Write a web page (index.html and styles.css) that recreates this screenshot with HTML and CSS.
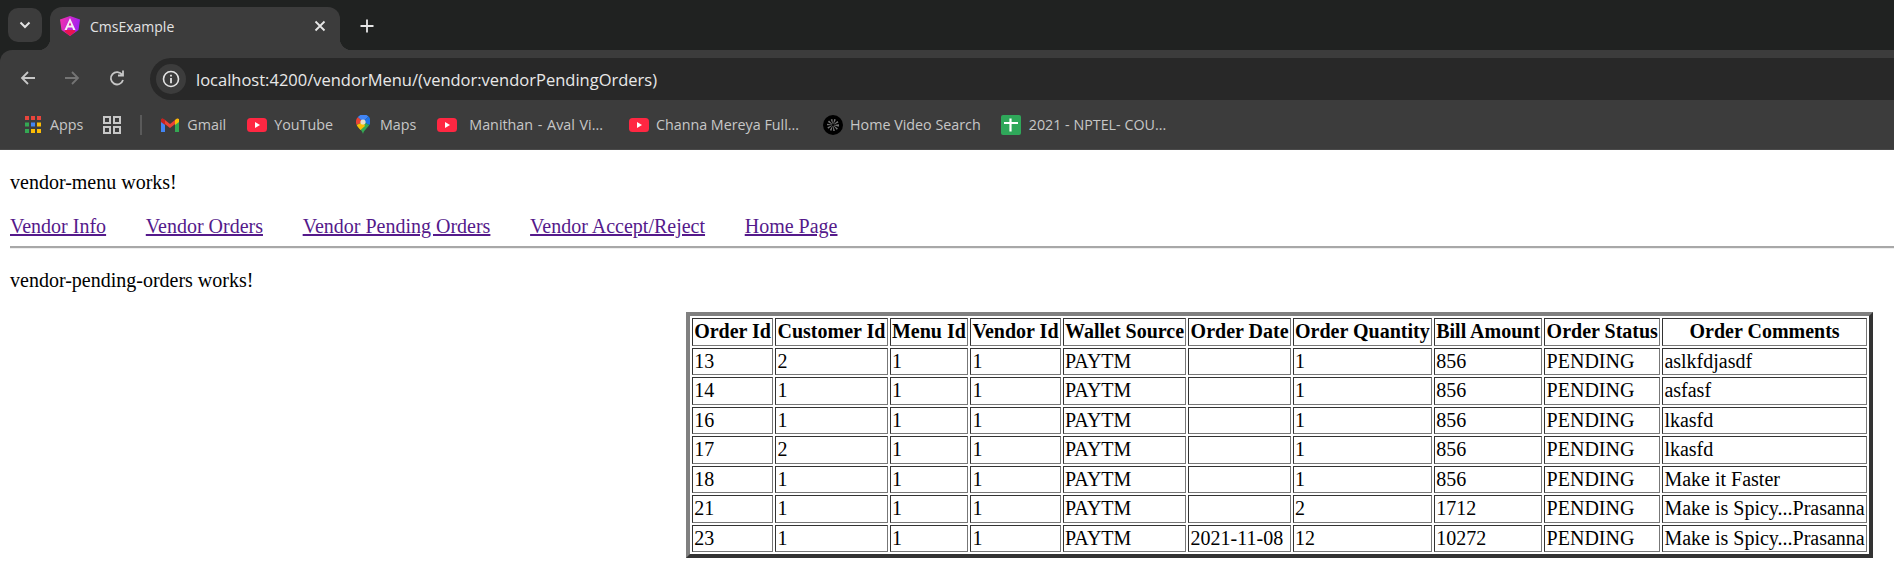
FILE: index.html
```html
<!DOCTYPE html>
<html lang="en">
<head>
    <meta charset="UTF-8">
    <title>CmsExample</title>
    <link rel="stylesheet" href="styles.css">
</head>
<body>
    <div class="browser">
        <div class="tab-strip">
            <div class="tab-search">
                <svg width="14" height="14" viewBox="0 0 14 14"><path d="M2.500 4.500L7 9l4.500-4.500" fill="none" stroke="#e3e3e3" stroke-width="2"/></svg>
            </div>
            <div class="tab">
                <svg class="tab-icon" width="20" height="20" viewBox="0 0 20 20">
                    <defs>
                        <linearGradient id="ng" x1="0" y1="0" x2="1" y2="0.300">
                            <stop offset="0" stop-color="#f72fa8"/>
                            <stop offset="1" stop-color="#a31ff2"/>
                        </linearGradient>
                    </defs>
                    <path d="M10 0L0 3.500 1.500 14 10 20l8.500-6L20 3.500z" fill="url(#ng)"/>
                    <path d="M4.500 15.500L10 20l5.500-4.500-1-1.500h-9z" fill="#ea1450"/>
                    <path d="M10 2L4.500 14h2.300l1-2.500h4.400l1 2.500h2.300z" fill="#f6eef6"/>
                    <path d="M8.600 9.500L10 6.200l1.400 3.300z" fill="#d9208c"/>
                </svg>
                <span class="tab-title">CmsExample</span>
                <svg class="tab-close" width="12" height="12" viewBox="0 0 12 12"><path d="M1.500 1.500l9 9M10.500 1.500l-9 9" stroke="#e6e6e6" stroke-width="1.800"/></svg>
            </div>
            <svg class="new-tab" width="16" height="16" viewBox="0 0 16 16"><path d="M8 1.500v13M1.500 8h13" stroke="#e6e6e6" stroke-width="1.800"/></svg>
        </div>

        <div class="toolbar">
            <svg class="nav-icon back" width="18" height="18" viewBox="0 0 18 18"><path d="M16 9H3M9 3L3 9l6 6" fill="none" stroke="#c7c7c7" stroke-width="1.800"/></svg>
            <svg class="nav-icon forward" width="18" height="18" viewBox="0 0 18 18"><path d="M2 9h13M9 3l6 6-6 6" fill="none" stroke="#747474" stroke-width="1.800"/></svg>
            <svg class="nav-icon reload" width="18" height="18" viewBox="0 0 18 18"><path d="M15 11a6.200 6.200 0 1 1-.8-5.200M15 1.500v5h-5" fill="none" stroke="#c7c7c7" stroke-width="1.800"/></svg>
            <div class="address">
                <div class="site-info">
                    <svg width="18" height="18" viewBox="0 0 18 18"><circle cx="9" cy="9" r="7.500" fill="none" stroke="#e3e3e3" stroke-width="1.600"/><path d="M9 8v5.200M9 4.800v1.800" stroke="#e3e3e3" stroke-width="1.800"/></svg>
                </div>
                <span class="url">localhost:4200/vendorMenu/(vendor:vendorPendingOrders)</span>
            </div>
        </div>

        <div class="bookmarks">
            <div class="bookmark apps">
                <svg width="16" height="17" viewBox="0 0 16 17">
                    <path d="M0 0h4v4H0z" fill="#e8453c"/><path d="M6 0h4v4H6z" fill="#e8453c"/><path d="M12 0h4v4h-4z" fill="#e8453c"/>
                    <path d="M0 6.500h4v4H0z" fill="#34a853"/><path d="M6 6.500h4v4H6z" fill="#4285f4"/><path d="M12 6.500h4v4h-4z" fill="#fbbc05"/>
                    <path d="M0 13h4v4H0z" fill="#34a853"/><path d="M6 13h4v4H6z" fill="#fbbc05"/><path d="M12 13h4v4h-4z" fill="#fbbc05"/>
                </svg>
                <span>Apps</span>
            </div>
            <svg class="groups" width="18" height="18" viewBox="0 0 18 18">
                <path d="M1 1h6v6H1zM11 1h6v6h-6zM1 11h6v6H1zM11 11h6v6h-6z" fill="none" stroke="#c7c7c7" stroke-width="2"/>
            </svg>
            <div class="divider"></div>
            <div class="bookmark gmail">
                <svg width="18" height="14" viewBox="0 0 18 14">
                    <path d="M0 2v12h4V5z" fill="#4285f4"/>
                    <path d="M14 5v9h4V2z" fill="#34a853"/>
                    <path d="M1 .5L4 2l5 4 5-4 3-1.500L18 3 9 10 0 3z" fill="#ea4335"/>
                    <path d="M14 2l2-1.500L18 1v3l-4 3z" fill="#fbbc05"/>
                    <path d="M0 1l2-.5 2 1.500v5L0 4z" fill="#c5221f"/>
                </svg>
                <span>Gmail</span>
            </div>
            <div class="bookmark youtube">
                <svg class="yt" width="20" height="14" viewBox="0 0 20 14"><rect width="20" height="14" rx="3.500" fill="#ff2742"/><path d="M8 4v6l5-3z" fill="#fff"/></svg>
                <span>YouTube</span>
            </div>
            <div class="bookmark maps">
                <svg width="14" height="19" viewBox="0 0 14 19">
                    <path d="M1.800 2.200L7 7l5.500-5.500A7 7 0 0 0 1.800 2.200z" fill="#4285f4"/>
                    <path d="M12.500 1.500A7 7 0 0 1 13.300 10L7 7z" fill="#1a73e8"/>
                    <path d="M1.800 2.200A7 7 0 0 0 .7 10L7 7z" fill="#ea4335"/>
                    <path d="M.7 10C2.500 13 6 15 7 19c1-4 4.500-6 6.300-9L7 7z" fill="#34a853"/>
                    <path d="M.7 10L7 7l2 4-4.500 4C3 13 1.500 12 .7 10z" fill="#fbbc05"/>
                    <circle cx="7" cy="7" r="2.600" fill="#e8e0c8"/>
                </svg>
                <span>Maps</span>
            </div>
            <div class="bookmark manithan">
                <svg class="yt" width="20" height="14" viewBox="0 0 20 14"><rect width="20" height="14" rx="3.500" fill="#ff2742"/><path d="M8 4v6l5-3z" fill="#fff"/></svg>
                <span>Manithan - Aval Vi...</span>
            </div>
            <div class="bookmark channa">
                <svg class="yt" width="20" height="14" viewBox="0 0 20 14"><rect width="20" height="14" rx="3.500" fill="#ff2742"/><path d="M8 4v6l5-3z" fill="#fff"/></svg>
                <span>Channa Mereya Full...</span>
            </div>
            <div class="bookmark video">
                <svg width="20" height="20" viewBox="0 0 20 20">
                    <circle cx="10" cy="10" r="10" fill="#000"/>
                    <circle cx="10" cy="10" r="3.500" fill="none" stroke="#777" stroke-width="5" stroke-dasharray="1 1.100"/>
                </svg>
                <span>Home Video Search</span>
            </div>
            <div class="bookmark nptel">
                <svg width="20" height="20" viewBox="0 0 20 20"><rect width="20" height="20" rx="2" fill="#2fa85a"/><path d="M3 8h14M9.500 3.500v13" stroke="#fff" stroke-width="2.200"/></svg>
                <span>2021 - NPTEL- COU...</span>
            </div>
        </div>
    </div>

    <div class="page">
        <p class="works first">vendor-menu works!</p>
        <nav class="vendor-nav">
            <a href="#">Vendor Info</a>
            <a href="#">Vendor Orders</a>
            <a href="#">Vendor Pending Orders</a>
            <a href="#">Vendor Accept/Reject</a>
            <a href="#">Home Page</a>
        </nav>
        <hr class="rule">
        <p class="works">vendor-pending-orders works!</p>

        <table class="orders" border="1">
            <thead>
                <tr>
                    <th>Order Id</th><th>Customer Id</th><th>Menu Id</th><th>Vendor Id</th><th>Wallet Source</th>
                    <th>Order Date</th><th>Order Quantity</th><th>Bill Amount</th><th>Order Status</th><th>Order Comments</th>
                </tr>
            </thead>
            <tbody>
                <tr><td>13</td><td>2</td><td>1</td><td>1</td><td>PAYTM</td><td></td><td>1</td><td>856</td><td>PENDING</td><td>aslkfdjasdf</td></tr>
                <tr><td>14</td><td>1</td><td>1</td><td>1</td><td>PAYTM</td><td></td><td>1</td><td>856</td><td>PENDING</td><td>asfasf</td></tr>
                <tr><td>16</td><td>1</td><td>1</td><td>1</td><td>PAYTM</td><td></td><td>1</td><td>856</td><td>PENDING</td><td>lkasfd</td></tr>
                <tr><td>17</td><td>2</td><td>1</td><td>1</td><td>PAYTM</td><td></td><td>1</td><td>856</td><td>PENDING</td><td>lkasfd</td></tr>
                <tr><td>18</td><td>1</td><td>1</td><td>1</td><td>PAYTM</td><td></td><td>1</td><td>856</td><td>PENDING</td><td>Make it Faster</td></tr>
                <tr><td>21</td><td>1</td><td>1</td><td>1</td><td>PAYTM</td><td></td><td>2</td><td>1712</td><td>PENDING</td><td>Make is Spicy...Prasanna</td></tr>
                <tr><td>23</td><td>1</td><td>1</td><td>1</td><td>PAYTM</td><td>2021-11-08</td><td>12</td><td>10272</td><td>PENDING</td><td>Make is Spicy...Prasanna</td></tr>
            </tbody>
        </table>
    </div>
</body>
</html>
```

FILE: styles.css
```css
html, body {
    margin: 0;
    padding: 0;
    background: #fff;
}

body {
    font-family: "Liberation Serif", "Times New Roman", serif;
    font-size: 20px;
    color: #000;
}

.browser {
    font-family: "Open Sans", "Noto Sans", sans-serif;
    background: #202221;
}

.tab-strip {
    height: 50px;
    display: flex;
    align-items: flex-start;
    padding: 8px 0 0 8px;
    box-sizing: border-box;
}

.tab-search {
    width: 34px;
    height: 34px;
    border-radius: 10px;
    background: #3c3c3c;
    display: flex;
    align-items: center;
    justify-content: center;
}

.tab {
    width: 290px;
    height: 43px;
    margin: -1px 0 0 8px;
    padding: 0 14px 5px 10px;
    box-sizing: border-box;
    border-radius: 12px 12px 0 0;
    background: #3c3c3c;
    display: flex;
    align-items: center;
    position: relative;
}

.tab::before, .tab::after {
    content: "";
    position: absolute;
    bottom: 0;
    width: 12px;
    height: 12px;
}

.tab::before {
    left: -12px;
    background: radial-gradient(circle at 0 0, transparent 12px, #3c3c3c 12.500px);
}

.tab::after {
    right: -12px;
    background: radial-gradient(circle at 100% 0, transparent 12px, #3c3c3c 12.500px);
}

.tab-title {
    margin-left: 10px;
    flex: 1;
    font-size: 14px;
    color: #e3e3e3;
}

.new-tab {
    margin: 10px 0 0 19px;
}

.toolbar {
    height: 50px;
    background: #3c3c3c;
    border-radius: 12px 0 0 0;
    display: flex;
    align-items: flex-start;
    padding-top: 8px;
    box-sizing: border-box;
}

.nav-icon {
    margin-top: 11px;
}

.back { margin-left: 19px; }
.forward { margin-left: 26px; }
.reload { margin-left: 27px; }

.address {
    flex: 1;
    height: 42px;
    margin-left: 24px;
    border-radius: 21px 0 0 21px;
    background: #282828;
    display: flex;
    align-items: center;
    padding-left: 6px;
}

.site-info {
    width: 30px;
    height: 30px;
    border-radius: 50%;
    background: #3c3c3c;
    display: flex;
    align-items: center;
    justify-content: center;
}

.url {
    margin-left: 10px;
    font-size: 16.500px;
    color: #e8e8e8;
}

.bookmarks {
    height: 50px;
    background: #3c3c3c;
    border-bottom: 1px solid #4a4a4a;
    display: flex;
    align-items: center;
    padding-left: 25px;
    box-sizing: border-box;
    font-size: 14.300px;
    color: #c7c7c7;
}

.bookmark {
    display: flex;
    align-items: center;
    white-space: nowrap;
}

.groups {
    margin-left: 20px;
}

.divider {
    width: 2px;
    height: 20px;
    margin: 0 19px;
    background: #5a5a5a;
}

.apps { gap: 9px; }
.gmail { gap: 8px; }
.youtube { margin-left: 21px; gap: 7px; }
.maps { margin-left: 23px; gap: 10px; }
.manithan { margin-left: 21px; gap: 12px; word-spacing: 1px; }
.channa { margin-left: 26px; gap: 7px; }
.video { margin-left: 24px; gap: 7px; }
.nptel { margin-left: 20px; gap: 8px; }

.page {
    padding: 0 0 0 10px;
}

.works {
    margin: 0;
    padding-top: 20px;
    line-height: 23px;
}

.first {
    padding-top: 21px;
}

.vendor-nav {
    display: flex;
    gap: 39.700px;
    margin-top: 21px;
    line-height: 23px;
}

.vendor-nav a {
    color: #551a8b;
}

.rule {
    margin: 8px 0 0;
    height: 0;
    border: 0;
    border-top: 2px solid #a8a8a8;
    border-bottom: 1px solid #eee;
}

.orders {
    margin: 20px 21px 0 auto;
    border-spacing: 2.400px;
    border: 4px solid;
    border-color: #808080 #333 #333 #808080;
}

.orders th, .orders td {
    padding: 1.250px;
    border: 1px solid;
    border-color: #333 #777 #777 #333;
    text-align: left;
    white-space: nowrap;
}

.orders td {
    line-height: 23px;
}

.orders th {
    text-align: center;
    line-height: 23px;
}
```
